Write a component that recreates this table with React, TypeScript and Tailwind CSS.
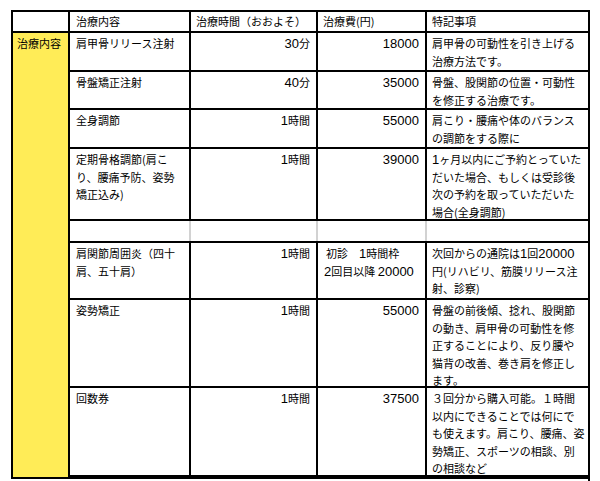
import React from "react";

const D = ({ t }: { t: string }) => {
  const parts = t.split(/(\d+)/);
  return (
    <>
      {parts.map((p, i) =>
        /^\d+$/.test(p) ? (
          <span key={i} className="font-['Liberation_Sans',sans-serif] text-[13px] leading-none">
            {p}
          </span>
        ) : (
          <React.Fragment key={i}>{p}</React.Fragment>
        )
      )}
    </>
  );
};

const Lines = ({ lines }: { lines: string[] }) => (
  <>
    {lines.map((l, i) => (
      <div key={i} className="whitespace-nowrap">
        <D t={l} />
      </div>
    ))}
  </>
);

type Row = { name: string[]; time: string; cost: string; notes: string[] };

const rows1: Row[] = [
  { name: ["肩甲骨リリース注射"], time: "30分", cost: "18000", notes: ["肩甲骨の可動性を引き上げる", "治療方法です。"] },
  { name: ["骨盤矯正注射"], time: "40分", cost: "35000", notes: ["骨盤、股関節の位置・可動性", "を修正する治療です。"] },
  { name: ["全身調節"], time: "1時間", cost: "55000", notes: ["肩こり・腰痛や体のバランス", "の調節をする際に"] },
  {
    name: ["定期骨格調節(肩こ", "り、腰痛予防、姿勢", "矯正込み)"],
    time: "1時間",
    cost: "39000",
    notes: ["1ヶ月以内にご予約とっていた", "だいた場合、もしくは受診後", "次の予約を取っていただいた", "場合(全身調節)"],
  },
];

const rows2: Row[] = [
  {
    name: ["肩関節周囲炎（四十", "肩、五十肩）"],
    time: "1時間",
    cost: "special",
    notes: ["次回からの通院は1回20000", "円(リハビリ、筋膜リリース注", "射、診察)"],
  },
  {
    name: ["姿勢矯正"],
    time: "1時間",
    cost: "55000",
    notes: ["骨盤の前後傾、捻れ、股関節", "の動き、肩甲骨の可動性を修", "正することにより、反り腰や", "猫背の改善、巻き肩を修正し", "ます。"],
  },
  {
    name: ["回数券"],
    time: "1時間",
    cost: "37500",
    notes: ["３回分から購入可能。１時間", "以内にできることでは何にで", "も使えます。肩こり、腰痛、姿", "勢矯正、スポーツの相談、別", "の相談など"],
  },
];

const cell = "bg-white pt-[2px]";

function RowCells({ r }: { r: Row }) {
  return (
    <>
      <div className={`${cell} pl-[6px]`}>
        <Lines lines={r.name} />
      </div>
      <div className={`${cell} pr-[6px] text-right`}>
        <D t={r.time} />
      </div>
      {r.cost === "special" ? (
        <div className={`${cell} pl-[6px]`}>
          <div className="whitespace-nowrap pl-[2px]">
            初診<span className="ml-[11px]"><D t="1時間枠" /></span>
          </div>
          <div className="whitespace-nowrap">
            <D t="2回目以降 20000" />
          </div>
        </div>
      ) : (
        <div className={`${cell} pr-[6px] text-right`}>
          <D t={r.cost} />
        </div>
      )}
      <div className={`${cell} pl-[5px]`}>
        <Lines lines={r.notes} />
      </div>
    </>
  );
}

export default function App() {
  return (
    <div className="w-[600px] h-[481px] overflow-hidden bg-white pt-[10px] font-['Noto_Sans_CJK_JP',sans-serif] text-[11px] leading-[17.5px] text-black">
      <div className="ml-[11px] w-[579px] grid grid-cols-[55px_119px_125px_107px_161px] grid-rows-[19px_37px_36px_37px_70px_20px_55px_86px_87px] gap-[2px] p-[2px] bg-black">
        <div className="bg-white" />
        <div className="bg-white pl-[6px] flex items-center">治療内容</div>
        <div className="bg-white pl-[5px] flex items-center whitespace-nowrap">治療時間（おおよそ）</div>
        <div className="bg-white pl-[5px] flex items-center">治療費(円)</div>
        <div className="bg-white pl-[5px] flex items-center">特記事項</div>

        <div className="col-start-1 row-start-2 row-span-9 bg-[#ffec57] pl-[4px] pt-[2px] whitespace-nowrap">
          治療内容
        </div>

        {rows1.map((r, i) => (
          <RowCells key={i} r={r} />
        ))}

        <div className="col-start-2 col-span-4 row-start-6 flex bg-white">
          <div className="w-[119px]" />
          <div className="w-[2px] bg-[#d2d2d2]" />
          <div className="w-[125px]" />
          <div className="w-[2px] bg-[#d2d2d2]" />
          <div className="w-[107px]" />
          <div className="w-[2px] bg-[#d2d2d2]" />
          <div className="w-[161px]" />
        </div>

        {rows2.map((r, i) => (
          <RowCells key={i} r={r} />
        ))}
      </div>
      <div className="ml-[11px] w-[579px] h-[10px] border-r-2 border-black" />
    </div>
  );
}
